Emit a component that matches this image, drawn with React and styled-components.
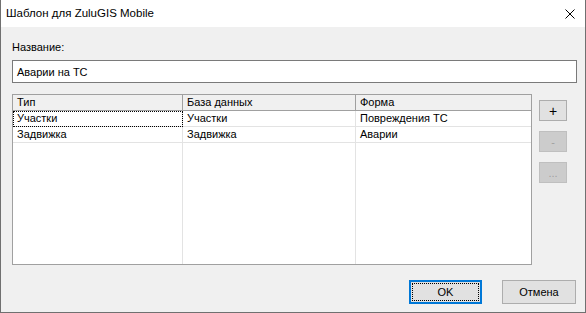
import React from 'react';
import styled, { createGlobalStyle } from 'styled-components';

const GlobalStyle = createGlobalStyle`
  html, body {
    margin: 0;
    padding: 0;
    background: #ffffff;
  }
  body {
    font-family: "Liberation Sans", Arial, sans-serif;
    font-size: 11px;
    color: #000;
  }
`;

const Window = styled.div`
  width: 586px;
  height: 313px;
  box-sizing: border-box;
  border: 1px solid #707070;
  border-top: none;
  background: #f0f0f0;
  display: flex;
  flex-direction: column;
  overflow: hidden;
`;

const TitleBar = styled.div`
  height: 26px;
  flex: none;
  background: #ffffff;
  display: flex;
  align-items: center;
  justify-content: space-between;
  padding: 0 10px 1px 5px;
  font-size: 11.5px;
`;

const CloseIcon = styled.svg`
  display: block;
  width: 10px;
  height: 10px;
  margin-top: 1px;
`;

const Body = styled.div`
  flex: 1;
  display: flex;
  flex-direction: column;
  padding: 13px 8px 0 11px;
`;

const Label = styled.div`
  line-height: 15px;
  height: 15px;
`;

const TextBox = styled.div`
  margin-top: 5px;
  height: 23px;
  box-sizing: border-box;
  border: 1px solid #7a7a7a;
  background: #fff;
  padding: 0 4px;
  display: flex;
  align-items: center;
`;

const Middle = styled.div`
  margin-top: 11px;
  display: flex;
  align-items: flex-start;
`;

const List = styled.div`
  width: 520px;
  height: 171px;
  box-sizing: border-box;
  border: 1px solid #a0a0a0;
  background: #fff;
  display: grid;
  grid-template-columns: 170px 173px 1fr;
`;

const Column = styled.div`
  display: flex;
  flex-direction: column;
  border-right: ${p => (p.$last ? 'none' : '1px solid #e3e3e3')};
`;

const HeaderCell = styled.div`
  height: 15px;
  line-height: 15px;
  background: #f0f0f0;
  border-bottom: 1px solid #a0a0a0;
  border-right: ${p => (p.$last ? 'none' : '1px solid #a0a0a0')};
  margin-right: ${p => (p.$last ? '0' : '-1px')};
  padding-left: 4px;
`;

const Cell = styled.div`
  height: 16px;
  box-sizing: border-box;
  line-height: 15px;
  padding-left: 4px;
  border-bottom: 1px solid #e3e3e3;
  margin-right: ${p => (p.$focus ? '-1px' : '0')};
  outline: ${p => (p.$focus ? '1px dotted #000' : 'none')};
  outline-offset: -1px;
`;

const SideButtons = styled.div`
  margin-left: 7px;
  margin-top: 6px;
  display: flex;
  flex-direction: column;
  gap: 10px;
`;

const SmallButton = styled.div`
  width: 28px;
  height: 21px;
  box-sizing: border-box;
  border: 1px solid ${p => (p.$disabled ? '#bfbfbf' : '#adadad')};
  background: ${p => (p.$disabled ? '#cccccc' : '#e1e1e1')};
  color: ${p => (p.$disabled ? '#a0a0a0' : '#000')};
  display: flex;
  align-items: center;
  justify-content: center;
  font-size: ${p => (p.$big ? '14px' : '11px')};
`;

const Footer = styled.div`
  margin-top: 15px;
  display: flex;
  justify-content: flex-end;
  gap: 20px;
  padding-right: 1px;
`;

const Button = styled.div`
  width: ${p => (p.$wide ? '74px' : '73px')};
  height: 24px;
  box-sizing: border-box;
  background: #e1e1e1;
  border: ${p => (p.$default ? '2px solid #0078d7' : '1px solid #adadad')};
  display: flex;
  align-items: center;
  justify-content: center;
  padding: ${p => (p.$default ? '1px' : '0')};
`;

const Focus = styled.div`
  flex: 1;
  align-self: stretch;
  border: 1px dotted #000;
  display: flex;
  align-items: center;
  justify-content: center;
`;

const columns = [
  { title: 'Тип', values: ['Участки', 'Задвижка'] },
  { title: 'База данных', values: ['Участки', 'Задвижка'] },
  { title: 'Форма', values: ['Повреждения ТС', 'Аварии'] },
];

export default function App() {
  return (
    <>
      <GlobalStyle />
      <Window>
        <TitleBar>
          <span>Шаблон для ZuluGIS Mobile</span>
          <CloseIcon viewBox="0 0 10 10">
            <path d="M0.5 0.5 L9.5 9.5 M9.5 0.5 L0.5 9.5" stroke="#000" strokeWidth="1" fill="none" />
          </CloseIcon>
        </TitleBar>
        <Body>
          <Label>Название:</Label>
          <TextBox>Аварии на ТС</TextBox>
          <Middle>
            <List>
              {columns.map((col, ci) => (
                <Column key={col.title} $last={ci === columns.length - 1}>
                  <HeaderCell $last={ci === columns.length - 1}>{col.title}</HeaderCell>
                  {col.values.map((v, ri) => (
                    <Cell key={ri} $focus={ci === 0 && ri === 0}>{v}</Cell>
                  ))}
                </Column>
              ))}
            </List>
            <SideButtons>
              <SmallButton $big>+</SmallButton>
              <SmallButton $disabled>-</SmallButton>
              <SmallButton $disabled>...</SmallButton>
            </SideButtons>
          </Middle>
          <Footer>
            <Button $default>
              <Focus>OK</Focus>
            </Button>
            <Button $wide>Отмена</Button>
          </Footer>
        </Body>
      </Window>
    </>
  );
}
